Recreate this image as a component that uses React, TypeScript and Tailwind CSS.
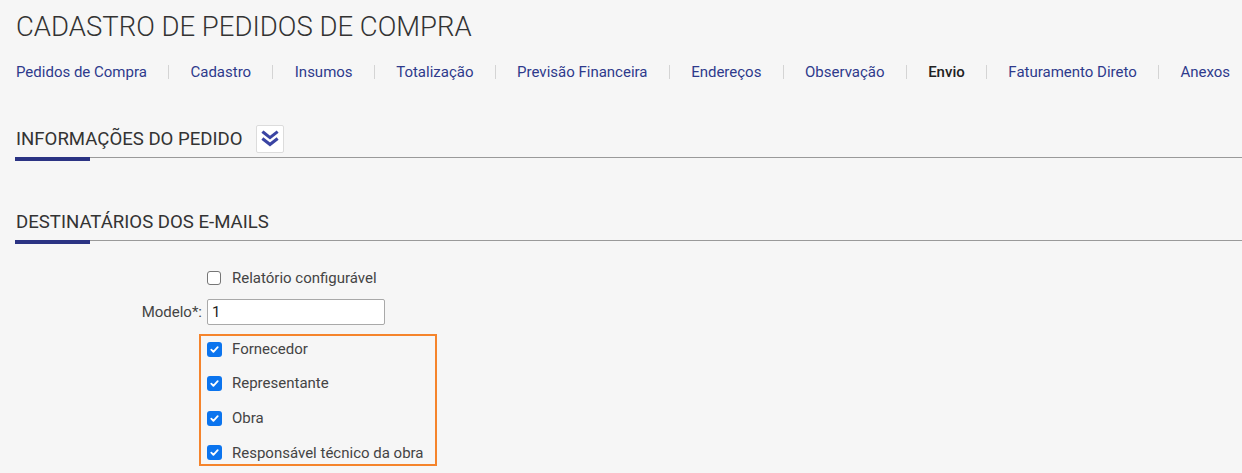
import React from 'react';

const tabs = [
  'Pedidos de Compra',
  'Cadastro',
  'Insumos',
  'Totalização',
  'Previsão Financeira',
  'Endereços',
  'Observação',
  'Envio',
  'Faturamento Direto',
  'Anexos',
];

const recipients = ['Fornecedor', 'Representante', 'Obra', 'Responsável técnico da obra'];

const SectionHeader: React.FC<{ title: string; children?: React.ReactNode }> = ({ title, children }) => (
  <div className="pl-[15px]">
    <div className="flex items-center h-[30px] pl-px">
      <h2 className="text-[18.6px] text-[#333] uppercase leading-none">{title}</h2>
      {children}
    </div>
    <div className="mt-[3px] border-t border-[#9a9a9a]">
      <div className="w-[75px] h-[4px] -mt-px bg-[#2b3383]" />
    </div>
  </div>
);

const BlueCheck: React.FC = () => (
  <span className="w-[15px] h-[15px] rounded-[3px] bg-[#0b74ee] flex items-center justify-center">
    <svg viewBox="0 0 12 12" className="w-[11px] h-[11px]" fill="none" stroke="white" strokeWidth={2} strokeLinecap="round" strokeLinejoin="round">
      <path d="M2.5 6.2l2.3 2.3 4.7-5" />
    </svg>
  </span>
);

export default function App() {
  return (
    <div className="min-h-[473px] bg-[#f6f6f6] font-['Roboto',sans-serif] overflow-hidden">
      <h1 className="pl-[16px] pt-[9px] text-[27.5px] font-light text-[#333] leading-[36px]">
        CADASTRO DE PEDIDOS DE COMPRA
      </h1>

      <nav className="flex items-center pl-[16px] mt-[17px] h-[20px] text-[15px] whitespace-nowrap">
        {tabs.map((t, i) => (
          <React.Fragment key={t}>
            {i > 0 && <span className="mx-[21.3px] w-px h-[14px] bg-[#d4d4d4]" />}
            <span className={t === 'Envio' ? 'text-[#222] font-medium' : 'text-[#2e3a8c]'}>{t}</span>
          </React.Fragment>
        ))}
      </nav>

      <div className="mt-[42px]">
        <SectionHeader title="Informações do pedido">
          <button className="ml-[13px] w-[28px] h-[28px] bg-white border border-[#dcdcdc] rounded-[2px] flex items-center justify-center">
            <svg viewBox="0 0 24 24" className="w-[22px] h-[22px]" fill="none" stroke="#3a44a3" strokeWidth={3.4} strokeLinecap="square" strokeLinejoin="miter">
              <path d="M5 5l7 5.5 7-5.5" />
              <path d="M5 12.5l7 5.5 7-5.5" />
            </svg>
          </button>
        </SectionHeader>
      </div>

      <div className="mt-[46px]">
        <SectionHeader title="Destinatários dos e-mails" />
      </div>

      <div className="mt-[24px] text-[15px] text-[#444]">
        <div className="flex items-center h-[20px]">
          <div className="w-[207px]" />
          <span className="w-[14px] h-[14px] rounded-[3px] border border-[#767676] bg-white" />
          <span className="ml-[11px]">Relatório configurável</span>
        </div>

        <div className="flex items-center mt-[11px] h-[26px]">
          <label className="w-[203px] text-right pr-[1px]">Modelo*:</label>
          <div className="ml-[4px] w-[178px] h-[26px] bg-white border border-[#a9a9a9] rounded-[2px] flex items-center px-[4px] text-[#222]">
            1
          </div>
        </div>

        <div className="flex mt-[9px]">
          <div className="w-[199px]" />
          <div className="w-[238px] border-2 border-[#f5842c] pl-[6px] pt-[3px] pb-px">
            {recipients.map((r, i) => (
              <div key={r} className={`flex items-center h-[20px] ${i > 0 ? 'mt-[14.6px]' : ''}`}>
                <BlueCheck />
                <span className="ml-[10px]">{r}</span>
              </div>
            ))}
          </div>
        </div>
      </div>
    </div>
  );
}
